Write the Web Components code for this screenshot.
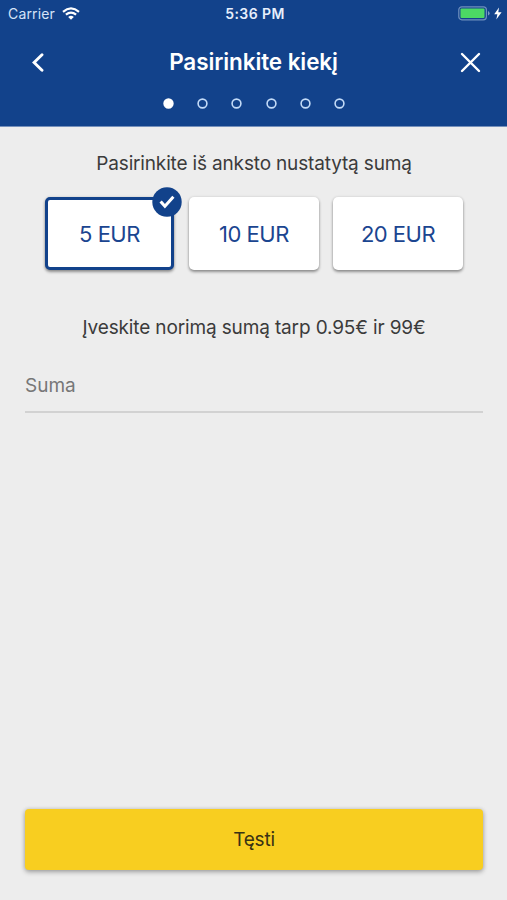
<!DOCTYPE html>
<html lang="lt">
<head>
<meta charset="utf-8">
<title>Pasirinkite kiekį</title>
<style>
html,body{margin:0;height:100%;background:#ededed}
body{font-family:Inter,"Liberation Sans",sans-serif;overflow:hidden}
</style>
</head>
<body>
<topup-screen></topup-screen>
<script>
const define = (name, markup) => {
  const t = document.createElement('template');
  t.innerHTML = markup;
  customElements.define(name, class extends HTMLElement {
    constructor() {
      super();
      this.attachShadow({ mode: 'open' }).append(t.content.cloneNode(true));
    }
  });
};

define('status-bar', `
<style>
:host{display:grid;grid-template-columns:1fr auto 1fr;align-items:center;height:27px;padding:0 5px 0 8px;box-sizing:border-box;color:#fff}
.left{display:flex;align-items:center;gap:7px;font-size:14px;letter-spacing:.15px;color:#d5e3f8}
.time{font-size:14px;font-weight:600;letter-spacing:.4px;color:#e6effc}
.right{display:flex;justify-content:flex-end;align-items:center;gap:4px}
svg{display:block}
</style>
<div class="left"><span>Carrier</span>
<svg width="18" height="13" viewBox="0 0 18 13" fill="none" stroke="#fff" stroke-width="2.2"><path d="M1 4.8Q9-2 17 4.8"/><path d="M3.9 7.7Q9 3.4 14.1 7.7"/><path d="M6.2 9.9Q9 7.5 11.8 9.9L9 12.7Z" fill="#fff" stroke="none"/></svg></div>
<div class="time">5:36 PM</div>
<div class="right">
<svg width="32" height="15" viewBox="0 0 32 15"><rect x=".8" y=".8" width="27.6" height="13" rx="3" fill="none" stroke="#6f8fbd" stroke-width="1.2"/><rect x="2.5" y="2.5" width="24" height="9.6" rx="1" fill="#4cd964"/><path d="M30 5v4.6q1.6-.7 1.6-2.3T30 5Z" fill="#7d9ac4"/></svg>
<svg width="8" height="13" viewBox="0 0 8 13"><path d="M5 .5.2 7.2H3.4L2.3 12.5 7.6 5.3H4.3Z" fill="#fff"/></svg>
</div>`);

define('title-bar', `
<style>
:host{display:flex;align-items:center;justify-content:space-between;height:70px;padding:0 26px 0 31px;box-sizing:border-box;color:#fff}
h1{margin:0 0 0 3px;font-size:22.5px;line-height:28px;font-weight:600;letter-spacing:-.1px}
svg{display:block}
</style>
<svg width="13" height="19" viewBox="0 0 13 19"><path d="M11 1.8 3.1 9.5l7.9 7.7" fill="none" stroke="#fff" stroke-width="2.9" stroke-linecap="round"/></svg>
<h1><slot></slot></h1>
<svg width="21" height="21" viewBox="0 0 21 21"><path d="m2 2 17 17M19 2 2 19" stroke="#fff" stroke-width="2.4" stroke-linecap="round"/></svg>`);

define('step-dots', `
<style>
:host{display:flex;justify-content:center;gap:23.3px;height:11px;padding:1px 0 0 1px}
svg{display:block;fill:none;stroke:#c3dbf8;stroke-width:1.6}
svg:first-of-type{fill:#fff;stroke:#fff}
</style>` + '<svg width="11" height="11" viewBox="0 0 11 11"><circle cx="5.5" cy="5.5" r="4.4"/></svg>'.repeat(6));

define('amount-card', `
<style>
:host{display:flex;position:relative;align-items:center;justify-content:center;height:73px;box-sizing:border-box;border-radius:5px;background:#fff;color:#1b4590;font-size:22px;letter-spacing:-.5px;box-shadow:0 2px 3px rgba(0,0,0,.38),0 0 3px rgba(0,0,0,.12)}
:host([selected]){border:3px solid #12428b;margin-right:1px}
svg{display:none}
:host([selected]) svg{display:block;position:absolute;right:-11px;top:-13px}
</style>
<slot></slot>
<svg width="30" height="30" viewBox="0 0 30 30"><circle cx="15" cy="15" r="14.7" fill="#12428b"/><path d="m9.6 15.6 3.3 3.7L20.4 10.8" fill="none" stroke="#fff" stroke-width="3" stroke-linecap="square"/></svg>`);

define('amount-field', `
<style>
:host{display:block;height:39px;border-bottom:2px solid #d2d2d2;font-size:19px;line-height:28px;color:#777}
</style><slot></slot>`);

define('action-button', `
<style>
:host{display:flex;align-items:center;justify-content:center;height:61px;border-radius:4px;background:#f8ce20;color:#393214;font-size:19px;letter-spacing:-.2px;box-shadow:0 2px 5px rgba(0,0,0,.3),0 0 4px rgba(0,0,0,.12)}
</style><slot></slot>`);

define('topup-screen', `
<style>
:host{display:flex;flex-direction:column;height:900px;background:#ededed;color:#3b3b3b}
header{height:126px;background:#12428b;border-bottom:1px solid #7590bb;box-sizing:content-box}
main{flex:1;display:flex;flex-direction:column;padding:23px 24px 30px 25px;min-height:0}
p{margin:0;text-align:center;font-size:19px;line-height:28px}
.cards{display:grid;grid-template-columns:repeat(3,130px);gap:14px;margin:19px 19px 44px 20px}
amount-field{margin-top:29.5px}
action-button{margin-top:auto}
.a{letter-spacing:-.16px}
.b{letter-spacing:-.14px}
</style>
<header>
<status-bar></status-bar>
<title-bar>Pasirinkite kiekį</title-bar>
<step-dots></step-dots>
</header>
<main>
<p class="a">Pasirinkite iš anksto nustatytą sumą</p>
<div class="cards"><amount-card selected>5 EUR</amount-card><amount-card>10 EUR</amount-card><amount-card>20 EUR</amount-card></div>
<p class="b">Įveskite norimą sumą tarp 0.95€ ir 99€</p>
<amount-field>Suma</amount-field>
<action-button>Tęsti</action-button>
</main>`);
</script>
</body>
</html>
